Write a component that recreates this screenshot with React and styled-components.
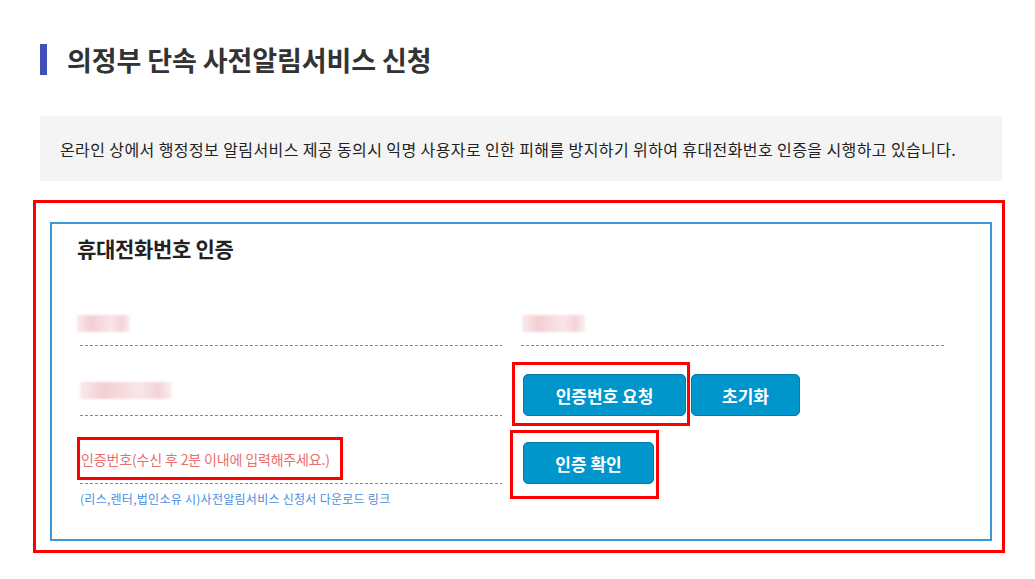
import styled, { createGlobalStyle } from 'styled-components'

const GlobalStyle = createGlobalStyle`
    body {
        margin: 0;
        background: #fff;
        font-family: "Noto Sans CJK KR", "Noto Sans", sans-serif;
        color: #222;
    }
`

const Page = styled.div`
    padding: 44px 0 0 40px;
    width: 962px;
`

const TitleRow = styled.div`
    display: flex;
    align-items: center;
    gap: 20px;
    height: 31px;
`

const TitleBar = styled.div`
    width: 7px;
    height: 31px;
    background: #4150b8;
`

const Title = styled.h1`
    margin: 0;
    font-size: 27px;
    font-weight: 700;
    color: #333;
    line-height: 31px;
    letter-spacing: -0.1px;
`

const Notice = styled.div`
    margin-top: 41px;
    height: 65px;
    background: #f4f4f4;
    display: flex;
    align-items: center;
    padding-left: 20px;
    font-size: 16px;
    letter-spacing: 0.4px;
    color: #222;
`

const Highlight = styled.div`
    margin: 19px 0 0 -7px;
    width: 942px;
    border: 3px solid #ff0000;
    padding: 19px 10px 9px 14px;
`

const Panel = styled.div`
    border: 2px solid #389ad8;
    height: 305px;
    padding: 10px 45px 0 28px;
`

const PanelTitle = styled.h2`
    margin: 0 0 40px -3px;
    font-size: 21px;
    font-weight: 700;
    color: #222;
    line-height: 28px;
    letter-spacing: -0.3px;
`

const Row = styled.div`
    display: flex;
    align-items: flex-start;
    gap: 19px;
`

const Field = styled.div`
    width: ${p => p.$width || 422}px;
    height: ${p => p.$height}px;
    padding-top: ${p => p.$top}px;
    box-sizing: border-box;
    background: linear-gradient(to right, #3a9de0 3px, transparent 3px) left bottom / 5px 1px repeat-x;
`

const Cell = styled.div`
    width: 422px;
`

const Blur = styled.div`
    width: ${p => p.$w}px;
    height: 17px;
    margin-left: ${p => p.$left || 0}px;
    background: linear-gradient(90deg, #fbeaec 0%, #f4cfd3 25%, #f6dadd 45%, #f9e6e8 65%, #f3d4d8 85%, #fbeff0 100%);
    filter: blur(1px);
`

const Buttons = styled.div`
    display: flex;
    align-items: flex-start;
    margin-top: ${p => p.$top}px;
`

const Marker = styled.div`
    border: 3px solid #ff0000;
    padding: ${p => p.$pad};
    margin-left: ${p => p.$left || 0}px;
`

const Button = styled.button`
    width: ${p => p.$w}px;
    height: 42px;
    background: #0096cc;
    border: 1px solid #0b77a6;
    border-radius: 5px;
    color: #fff;
    font-family: "Noto Sans CJK KR", sans-serif;
    font-size: 17px;
    font-weight: 700;
    cursor: pointer;
    margin-left: ${p => p.$gap || 0}px;
    margin-top: ${p => p.$top || 0}px;
`

const HintBox = styled.div`
    display: inline-flex;
    align-items: center;
    height: 37px;
    margin: 0 0 1px -3px;
    padding: 0 10px 0 1px;
    border: 3px solid #ff0000;
    font-size: 14px;
    letter-spacing: -0.15px;
    color: #e97070;
`

const Link = styled.a`
    display: block;
    margin-top: 6px;
    font-size: 12px;
    letter-spacing: 0.27px;
    color: #4a8de3;
    text-decoration: none;
    cursor: pointer;
`

export default function App() {
    return (
        <>
            <GlobalStyle />
            <Page>
                <TitleRow>
                    <TitleBar />
                    <Title>의정부 단속 사전알림서비스 신청</Title>
                </TitleRow>
                <Notice>
                    온라인 상에서 행정정보 알림서비스 제공 동의시 익명 사용자로 인한 피해를 방지하기 위하여 휴대전화번호 인증을 시행하고 있습니다.
                </Notice>
                <Highlight>
                    <Panel>
                        <PanelTitle>휴대전화번호 인증</PanelTitle>
                        <Row>
                            <Field $height={44} $top={13}>
                                <Blur $w={53} $left={-3} />
                            </Field>
                            <Field $height={44} $top={13} $width={424}>
                                <Blur $w={63} $left={1} />
                            </Field>
                        </Row>
                        <Row>
                            <Field $height={70} $top={36}>
                                <Blur $w={92} />
                            </Field>
                            <Buttons $top={16}>
                                <Marker $pad="9px 1px 7px 8px" $left={-9}>
                                    <Button $w={163}>인증번호 요청</Button>
                                </Marker>
                                <Button $w={109} $gap={1} $top={12}>초기화</Button>
                            </Buttons>
                        </Row>
                        <Row>
                            <Cell>
                                <Field $height={58} $top={11} $width={422}>
                                    <HintBox>인증번호(수신 후 2분 이내에 입력해주세요.)</HintBox>
                                </Field>
                                <Link>(리스,렌터,법인소유 시)사전알림서비스 신청서 다운로드 링크</Link>
                            </Cell>
                            <Buttons $top={4}>
                                <Marker $pad="9px 2px 12px 10px" $left={-11}>
                                    <Button $w={131}>인증 확인</Button>
                                </Marker>
                            </Buttons>
                        </Row>
                    </Panel>
                </Highlight>
            </Page>
        </>
    )
}
